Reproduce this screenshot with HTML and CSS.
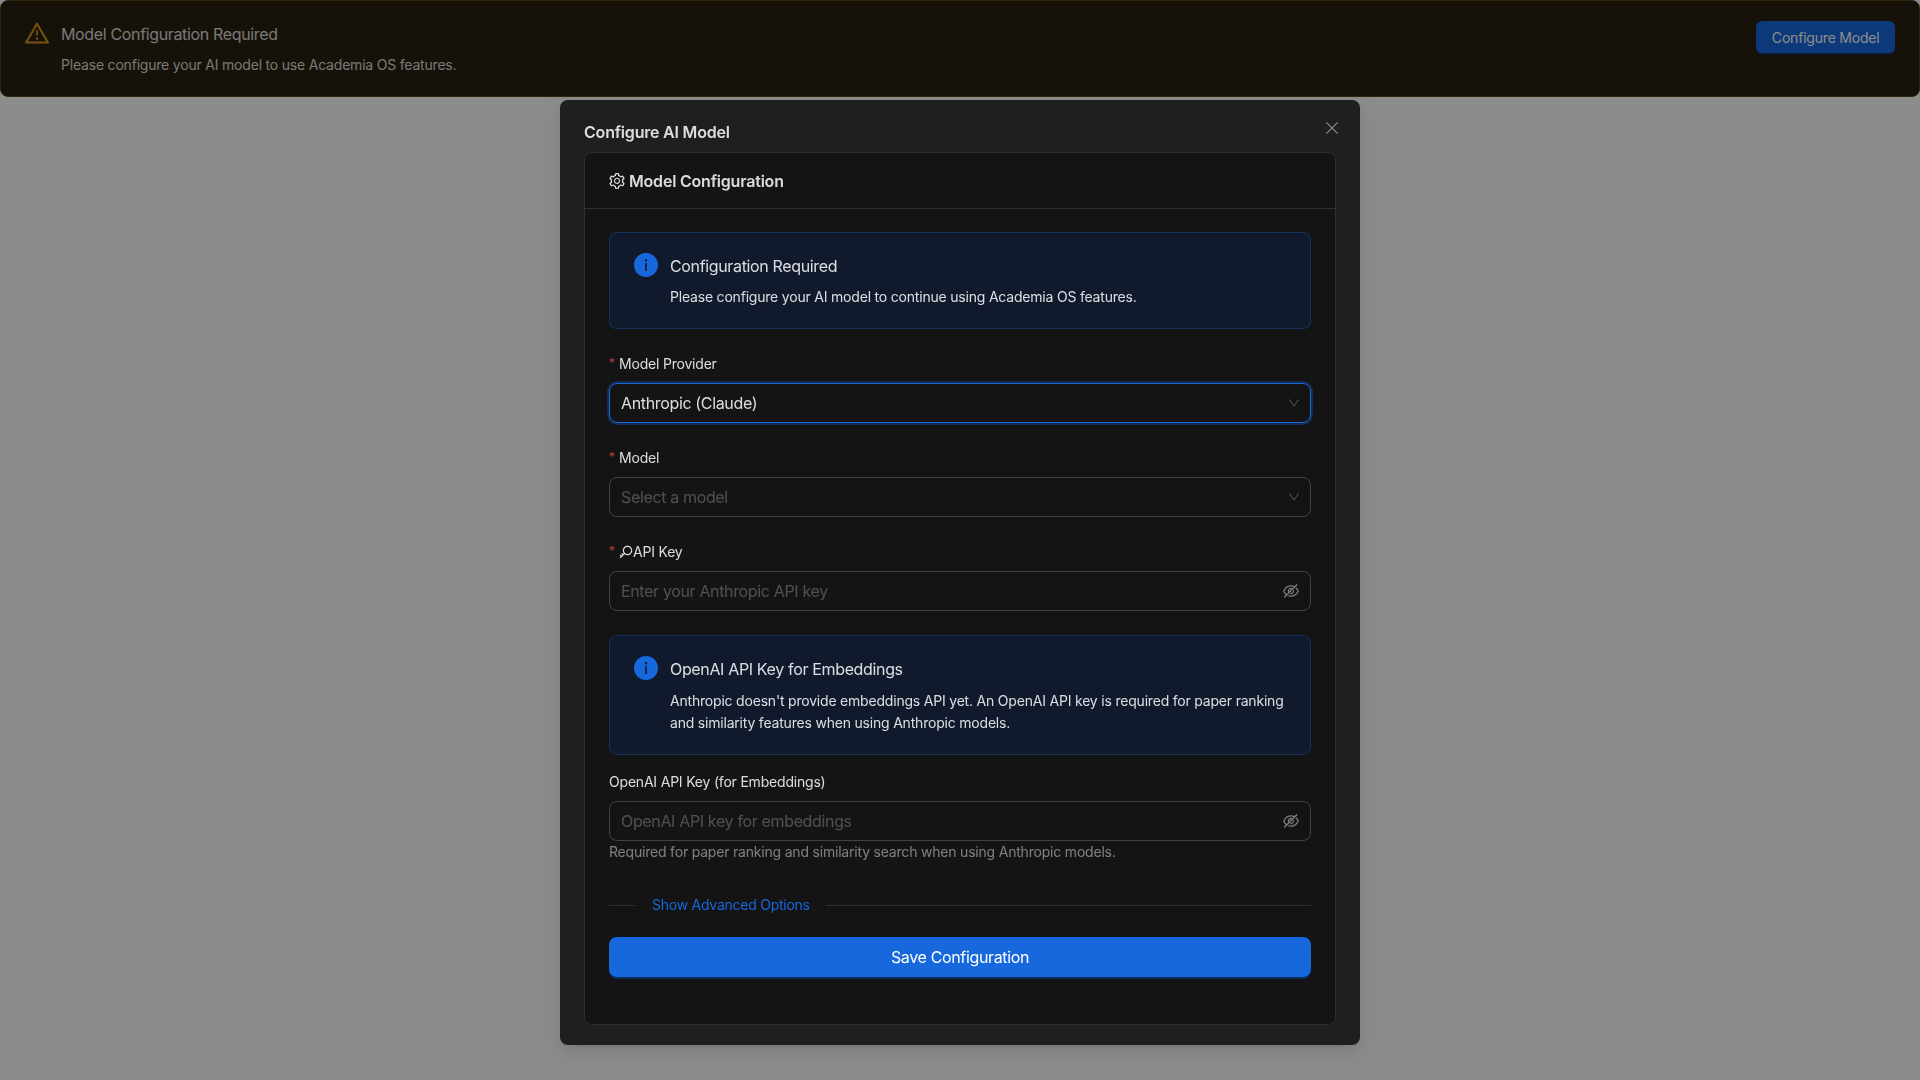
FILE: index.html
```html
<!DOCTYPE html>
<html lang="en">
<head>
	<meta charset="UTF-8">
	<title>Academia OS</title>
	<link rel="stylesheet" href="styles.css">
</head>

<body>
<div class="banner">
	<svg class="alert-icon warning" viewBox="64 64 896 896"><path d="M464 720a48 48 0 1 0 96 0 48 48 0 1 0-96 0zm16-304v184c0 4.4 3.6 8 8 8h48c4.4 0 8-3.6 8-8V416c0-4.4-3.6-8-8-8h-48c-4.4 0-8 3.6-8 8zm475.7 440l-416-720c-6.2-10.7-16.9-16-27.7-16s-21.6 5.3-27.7 16l-416 720C56 877.4 71.4 904 96 904h832c24.6 0 40-26.6 27.7-48zm-783.5-27.9L512 239.9l339.8 588.2H172.2z"/></svg>
	<div class="alert-text">
		<div class="alert-title">Model Configuration Required</div>
		<div class="alert-desc">Please configure your AI model to use Academia OS features.</div>
	</div>
	<a class="btn btn-small" href="javascript:">Configure Model</a>
</div>

<div class="mask">
	<div class="modal">
		<a class="close" href="javascript:">
			<svg viewBox="0 0 12 12"><path d="M.5.5l11 11M11.5.5l-11 11"/></svg>
		</a>
		<div class="modal-title">Configure AI Model</div>

		<div class="card">
			<div class="card-head">
				<svg class="gear" viewBox="64 64 896 896"><path d="M924.8 625.7l-65.5-56c3.1-19 4.7-38.4 4.7-57.8s-1.6-38.8-4.7-57.8l65.5-56a32.03 32.03 0 0 0 9.3-35.2l-.9-2.6a443.74 443.74 0 0 0-79.7-137.9l-1.8-2.1a32.12 32.12 0 0 0-35.1-9.5l-81.3 28.9c-30-24.6-63.5-44-99.7-57.6l-15.7-85a32.05 32.05 0 0 0-25.8-25.7l-2.7-.5c-52.1-9.4-106.9-9.4-159 0l-2.7.5a32.05 32.05 0 0 0-25.8 25.7l-15.8 85.4a351.86 351.86 0 0 0-99 57.4l-81.9-29.1a32 32 0 0 0-35.1 9.5l-1.8 2.1a446.02 446.02 0 0 0-79.7 137.9l-.9 2.6c-4.5 12.5-.8 26.5 9.3 35.2l66.3 56.6c-3.1 18.8-4.6 38-4.6 57.1 0 19.2 1.5 38.4 4.6 57.1L99 625.5a32.03 32.03 0 0 0-9.3 35.2l.9 2.6c18.1 50.4 44.9 96.9 79.7 137.9l1.8 2.1a32.12 32.12 0 0 0 35.1 9.5l81.9-29.1c29.8 24.5 63.1 43.9 99 57.4l15.8 85.4a32.05 32.05 0 0 0 25.8 25.7l2.7.5a449.4 449.4 0 0 0 159 0l2.7-.5a32.05 32.05 0 0 0 25.8-25.7l15.7-85a350 350 0 0 0 99.7-57.6l81.3 28.9a32 32 0 0 0 35.1-9.5l1.8-2.1c34.8-41.1 61.6-87.5 79.7-137.9l.9-2.6c4.5-12.3.8-26.3-9.3-35zM788.3 465.9c2.5 15.1 3.8 30.6 3.8 46.1s-1.3 31-3.8 46.1l-6.6 40.1 74.7 63.9a370.03 370.03 0 0 1-42.6 73.6L721 702.8l-31.4 25.8c-23.9 19.6-50.5 35-79.3 45.8l-38.1 14.3-17.9 97a377.5 377.5 0 0 1-85 0l-17.9-97.2-37.8-14.5c-28.5-10.8-55-26.2-78.7-45.7l-31.4-25.9-93.4 33.2c-17-22.9-31.2-47.6-42.6-73.6l75.5-64.5-6.5-40c-2.4-14.9-3.7-30.3-3.7-45.5 0-15.3 1.2-30.6 3.7-45.5l6.5-40-75.5-64.5c11.3-26.1 25.6-50.7 42.6-73.6l93.4 33.2 31.4-25.9c23.7-19.5 50.2-34.9 78.7-45.7l37.9-14.3 17.9-97.2c28.1-3.2 56.8-3.2 85 0l17.9 97 38.1 14.3c28.7 10.8 55.4 26.2 79.3 45.8l31.4 25.8 92.8-32.9c17 22.9 31.2 47.6 42.6 73.6L781.8 426l6.5 39.9zM512 326c-97.2 0-176 78.8-176 176s78.8 176 176 176 176-78.8 176-176-78.8-176-176-176zm79.2 255.2A111.6 111.6 0 0 1 512 614c-29.9 0-58-11.7-79.2-32.8A111.6 111.6 0 0 1 400 502c0-29.9 11.7-58 32.8-79.2C454 401.6 482.1 390 512 390c29.9 0 58 11.6 79.2 32.8A111.6 111.6 0 0 1 624 502c0 29.9-11.7 58-32.8 79.2z"/></svg>
				Model Configuration
			</div>
			<div class="card-body">
				<div class="info">
					<svg class="alert-icon" viewBox="64 64 896 896"><path d="M512 64C264.6 64 64 264.6 64 512s200.6 448 448 448 448-200.6 448-448S759.4 64 512 64zm32 664c0 4.4-3.6 8-8 8h-48c-4.4 0-8-3.6-8-8V456c0-4.4 3.6-8 8-8h48c4.4 0 8 3.6 8 8v272zm-32-344a48.01 48.01 0 0 1 0-96 48.01 48.01 0 0 1 0 96z"/></svg>
					<div class="alert-text">
						<div class="alert-title">Configuration Required</div>
						<div class="alert-desc">Please configure your AI model to continue using Academia OS features.</div>
					</div>
				</div>

				<div class="field">
					<label><span class="star">*</span>Model Provider</label>
					<div class="control focused">
						<span class="value">Anthropic (Claude)</span>
						<svg class="chevron" viewBox="64 64 896 896"><path d="M884 256h-75c-5.1 0-9.9 2.5-12.9 6.6L512 654.2 227.9 262.6c-3-4.1-7.8-6.6-12.9-6.6h-75c-6.5 0-10.3 7.4-6.5 12.7l352.6 486.1c12.8 17.6 39 17.6 51.7 0l352.6-486.1c3.9-5.3.1-12.7-6.4-12.7z"/></svg>
					</div>
				</div>

				<div class="field">
					<label><span class="star">*</span>Model</label>
					<div class="control">
						<span class="value placeholder">Select a model</span>
						<svg class="chevron" viewBox="64 64 896 896"><path d="M884 256h-75c-5.1 0-9.9 2.5-12.9 6.6L512 654.2 227.9 262.6c-3-4.1-7.8-6.6-12.9-6.6h-75c-6.5 0-10.3 7.4-6.5 12.7l352.6 486.1c12.8 17.6 39 17.6 51.7 0l352.6-486.1c3.9-5.3.1-12.7-6.4-12.7z"/></svg>
					</div>
				</div>

				<div class="field">
					<label><span class="star">*</span><svg class="key" viewBox="64 64 896 896"><path d="M608 112c-167.9 0-304 136.1-304 304 0 70.3 23.9 135 63.9 186.5l-41.1 41.1-62.3-62.3a8.15 8.15 0 0 0-11.4 0l-39.8 39.8a8.15 8.15 0 0 0 0 11.4l62.3 62.3-44.9 44.9-62.3-62.3a8.15 8.15 0 0 0-11.4 0l-39.8 39.8a8.15 8.15 0 0 0 0 11.4l62.3 62.3-65.3 65.3a8.03 8.03 0 0 0 0 11.3l42.3 42.3c3.1 3.1 8.2 3.1 11.3 0l253.6-253.6A304.06 304.06 0 0 0 608 720c167.9 0 304-136.1 304-304S775.9 112 608 112zm161.2 465.2C726.2 620.3 668.9 644 608 644c-60.9 0-118.2-23.7-161.2-66.8-43.1-43-66.8-100.3-66.8-161.2 0-60.9 23.7-118.2 66.8-161.2 43-43.1 100.3-66.8 161.2-66.8 60.9 0 118.2 23.7 161.2 66.8 43.1 43 66.8 100.3 66.8 161.2 0 60.9-23.7 118.2-66.8 161.2z"/></svg>API Key</label>
					<div class="control">
						<span class="value placeholder">Enter your Anthropic API key</span>
						<svg class="eye" viewBox="64 64 896 896"><path d="M942.2 486.2Q889.47 375.11 816.7 305l-50.88 50.88C807.31 395.53 843.45 447.4 874.7 512 791.5 684.2 673.4 766 512 766q-72.67 0-133.87-22.38L323 798.75Q408 838 512 838q288.3 0 430.2-300.3a60.29 60.29 0 0 0 0-51.5zm-63.57-320.64L836 122.88a8 8 0 0 0-11.32 0L715.31 232.2Q624.86 186 512 186q-288.3 0-430.2 300.3a60.3 60.3 0 0 0 0 51.5q56.69 119.4 136.5 191.41L112.48 835a8 8 0 0 0 0 11.31L155.17 889a8 8 0 0 0 11.31 0l712.15-712.12a8 8 0 0 0 0-11.32zM149.3 512C232.6 339.8 350.7 258 512 258c54.54 0 104.13 9.36 149.12 28.39l-70.3 70.3a176 176 0 0 0-238.13 238.13l-83.42 83.42C223.1 637.49 183.3 582.28 149.3 512zm246.7 0a112.11 112.11 0 0 1 146.2-106.69L401.31 546.2A112 112 0 0 1 396 512z"/><path d="M508 624c-3.46 0-6.87-.16-10.25-.47l-52.82 52.82a176.09 176.09 0 0 0 227.42-227.42l-52.82 52.82c.31 3.38.47 6.79.47 10.25a111.94 111.94 0 0 1-112 112z"/></svg>
					</div>
				</div>

				<div class="info info-tall">
					<svg class="alert-icon" viewBox="64 64 896 896"><path d="M512 64C264.6 64 64 264.6 64 512s200.6 448 448 448 448-200.6 448-448S759.4 64 512 64zm32 664c0 4.4-3.6 8-8 8h-48c-4.4 0-8-3.6-8-8V456c0-4.4 3.6-8 8-8h48c4.4 0 8 3.6 8 8v272zm-32-344a48.01 48.01 0 0 1 0-96 48.01 48.01 0 0 1 0 96z"/></svg>
					<div class="alert-text">
						<div class="alert-title">OpenAI API Key for Embeddings</div>
						<div class="alert-desc">Anthropic doesn't provide embeddings API yet. An OpenAI API key is required for paper ranking and similarity features when using Anthropic models.</div>
					</div>
				</div>

				<div class="field field-tight">
					<label>OpenAI API Key (for Embeddings)</label>
					<div class="control">
						<span class="value placeholder">OpenAI API key for embeddings</span>
						<svg class="eye" viewBox="64 64 896 896"><path d="M942.2 486.2Q889.47 375.11 816.7 305l-50.88 50.88C807.31 395.53 843.45 447.4 874.7 512 791.5 684.2 673.4 766 512 766q-72.67 0-133.87-22.38L323 798.75Q408 838 512 838q288.3 0 430.2-300.3a60.29 60.29 0 0 0 0-51.5zm-63.57-320.64L836 122.88a8 8 0 0 0-11.32 0L715.31 232.2Q624.86 186 512 186q-288.3 0-430.2 300.3a60.3 60.3 0 0 0 0 51.5q56.69 119.4 136.5 191.41L112.48 835a8 8 0 0 0 0 11.31L155.17 889a8 8 0 0 0 11.31 0l712.15-712.12a8 8 0 0 0 0-11.32zM149.3 512C232.6 339.8 350.7 258 512 258c54.54 0 104.13 9.36 149.12 28.39l-70.3 70.3a176 176 0 0 0-238.13 238.13l-83.42 83.42C223.1 637.49 183.3 582.28 149.3 512zm246.7 0a112.11 112.11 0 0 1 146.2-106.69L401.31 546.2A112 112 0 0 1 396 512z"/><path d="M508 624c-3.46 0-6.87-.16-10.25-.47l-52.82 52.82a176.09 176.09 0 0 0 227.42-227.42l-52.82 52.82c.31 3.38.47 6.79.47 10.25a111.94 111.94 0 0 1-112 112z"/></svg>
					</div>
					<div class="help">Required for paper ranking and similarity search when using Anthropic models.</div>
				</div>

				<div class="divider">
					<span class="divider-line short"></span>
					<a href="javascript:">Show Advanced Options</a>
					<span class="divider-line"></span>
				</div>

				<a class="btn btn-large" href="javascript:">Save Configuration</a>
			</div>
		</div>
	</div>
</div>
</body>
</html>
```

FILE: styles.css
```css
html, body {
	margin: 0;
	padding: 0;
	background: #fff;
	height: 100%;
	overflow: hidden;
}
body {
	font-family: "Inter", "Liberation Sans", sans-serif;
	font-size: 14px;
	line-height: 22px;
	letter-spacing: -.2px;
	color: rgba(255, 255, 255, .85);
}
a {
	text-decoration: none;
}

/* top warning */
.banner {
	display: flex;
	align-items: flex-start;
	padding: 20px 24px;
	background: #2b2111;
	border: 1px solid #594214;
	border-radius: 8px;
}
.banner .alert-text {
	flex: 1;
}
.alert-icon {
	flex: none;
	width: 24px;
	height: 24px;
	margin-right: 12px;
	fill: #1668dc;
}
.alert-icon.warning {
	fill: #d89614;
}
.alert-title {
	font-size: 16px;
	line-height: 27px;
	letter-spacing: -.35px;
	margin-bottom: 6px;
}

/* buttons */
.btn {
	display: block;
	background: #1668dc;
	color: #fff;
	text-align: center;
	box-shadow: 0 2px 0 rgba(5, 60, 140, .6);
}
.btn-small {
	box-sizing: border-box;
	height: 32px;
	line-height: 32px;
	padding: 1px 15.5px 0;
	border-radius: 6px;
}
.btn-large {
	height: 40px;
	line-height: 40px;
	font-size: 16px;
	letter-spacing: -.35px;
	border-radius: 8px;
}

/* dialog */
.mask {
	position: fixed;
	top: 0;
	left: 0;
	right: 0;
	bottom: 0;
	background: rgba(0, 0, 0, .45);
	display: flex;
	justify-content: center;
	align-items: flex-start;
}
.modal {
	position: relative;
	box-sizing: border-box;
	width: 800px;
	margin-top: 100px;
	padding: 20px 24px;
	background: #1f1f1f;
	border-radius: 8px;
	box-shadow: 0 6px 16px 0 rgba(0, 0, 0, .08), 0 3px 6px -4px rgba(0, 0, 0, .12), 0 9px 28px 8px rgba(0, 0, 0, .05);
}
.modal-title {
	font-size: 16px;
	font-weight: 600;
	line-height: 24px;
	margin-bottom: 8px;
}
.close {
	position: absolute;
	top: 22px;
	right: 22px;
	width: 12px;
	height: 12px;
}
.close svg {
	display: block;
	width: 12px;
	height: 12px;
	fill: none;
	stroke: rgba(255, 255, 255, .45);
	stroke-width: 1.2;
}
.card {
	background: #141414;
	border: 1px solid #303030;
	border-radius: 8px;
}
.card-head {
	display: flex;
	align-items: center;
	gap: 4px;
	height: 55px;
	padding: 0 24px;
	border-bottom: 1px solid #303030;
	font-size: 16px;
	font-weight: 600;
}
.gear {
	width: 16px;
	height: 16px;
	fill: rgba(255, 255, 255, .85);
}
.card-body {
	padding: 23px 24px 47px;
}

/* blue notes */
.info {
	display: flex;
	align-items: flex-start;
	padding: 20px 24px;
	background: #111a2c;
	border: 1px solid #15325b;
	border-radius: 8px;
	margin-bottom: 24px;
}
.info .alert-text {
	flex: 1;
}
.info-tall .alert-title {
	margin-bottom: 7px;
}

/* form rows */
.field {
	margin-bottom: 24px;
}
.field-tight {
	margin-top: -8px;
}
.field label {
	display: flex;
	align-items: center;
	height: 22px;
	margin-bottom: 8px;
}
.star {
	width: 10px;
	flex: none;
	color: #dc4446;
	font-family: "Liberation Serif", serif;
	font-size: 12px;
	line-height: 12px;
	margin-top: -4px;
}
.key {
	width: 14px;
	height: 14px;
	fill: rgba(255, 255, 255, .85);
}
.control {
	box-sizing: border-box;
	display: flex;
	align-items: center;
	height: 40px;
	padding: 0 11px;
	border: 1px solid #424242;
	border-radius: 8px;
}
.control.focused {
	border-color: #1668dc;
	box-shadow: 0 0 0 2px rgba(22, 104, 220, .3);
}
.value {
	flex: 1;
	font-size: 16px;
	letter-spacing: -.35px;
}
.placeholder {
	color: rgba(255, 255, 255, .25);
}
.chevron {
	width: 12px;
	height: 12px;
	margin-right: -1px;
	fill: rgba(255, 255, 255, .25);
}
.eye {
	width: 16px;
	height: 16px;
	fill: rgba(255, 255, 255, .45);
}
.help {
	color: rgba(255, 255, 255, .45);
}

/* advanced toggle */
.divider {
	display: flex;
	align-items: center;
	gap: 16px;
	height: 22px;
	margin-top: 31px;
	margin-bottom: 21px;
}
.divider a {
	margin-left: 1px;
	letter-spacing: -.25px;
	color: #1668dc;
}
.divider-line {
	flex: 1;
	height: 1px;
	background: rgba(253, 253, 253, .12);
}
.divider-line.short {
	flex: none;
	width: 26px;
}
```
